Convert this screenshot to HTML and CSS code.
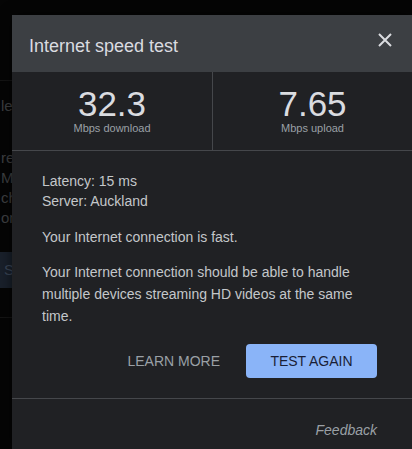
FILE: index.html
```html
<!DOCTYPE html>
<html lang="en">
<head>
    <meta charset="UTF-8">
    <meta name="viewport" content="width=device-width, initial-scale=1.0">
    <title>Internet speed test</title>
    <link rel="stylesheet" href="styles.css">
</head>
<body>
    <div class="page">
        <div class="page-top"></div>
        <div class="page-row">
            <span class="page-text">le</span>
        </div>
        <div class="page-block">
            <p class="page-text">re</p>
            <p class="page-text">M</p>
            <p class="page-text">ch</p>
            <p class="page-text">on</p>
        </div>
        <div class="page-action">
            <span class="page-btn">Sh</span>
        </div>
    </div>

    <div class="dialog">
        <div class="dialog-header">
            <h1>Internet speed test</h1>
            <button class="close" type="button" aria-label="Close">
                <svg width="14" height="14" viewBox="0 0 14 14">
                    <path d="M1 1 L13 13 M13 1 L1 13" stroke="#dadce0" stroke-width="2" fill="none"/>
                </svg>
            </button>
        </div>

        <div class="stats">
            <div class="stat">
                <span class="stat-value">32.3</span>
                <span class="stat-label">Mbps download</span>
            </div>
            <div class="stat">
                <span class="stat-value">7.65</span>
                <span class="stat-label">Mbps upload</span>
            </div>
        </div>

        <div class="dialog-body">
            <div class="meta">
                <p>Latency: 15 ms</p>
                <p>Server: Auckland</p>
            </div>
            <p class="summary">Your Internet connection is fast.</p>
            <p class="summary">Your Internet connection should be able to handle multiple devices streaming HD videos at the same time.</p>
            <div class="actions">
                <button class="btn-text" type="button">LEARN MORE</button>
                <button class="btn-primary" type="button">TEST AGAIN</button>
            </div>
        </div>

        <div class="dialog-footer">
            <a class="feedback" href="#">Feedback</a>
        </div>
    </div>
</body>
</html>
```

FILE: styles.css
```css
:root {
    --color-header: #3c3f43;
    --color-surface: #202124;
    --color-line: #45474b;
    --color-title: #dadce0;
    --color-text: #c4c7ca;
    --color-muted: #9aa0a6;
    --color-accent: #8ab4f8;
}
body {
    font-family: 'Liberation Sans', Arial, sans-serif;
    background-color: #050505;
    margin: 0;
    padding: 0;
    height: 449px;
    overflow: hidden;
    position: relative;
}

/* dimmed page behind the dialog */
.page {
    width: 60px;
    color: #3e3f41;
    font-size: 15px;
}
.page-top {
    height: 80px;
    border-bottom: 1px solid #141414;
}
.page-row {
    height: 48px;
    display: flex;
    align-items: center;
}
.page-text {
    padding-left: 1px;
}
.page-block {
    padding-top: 19px;
}
.page-block .page-text {
    margin: 0;
    line-height: 20px;
}
.page-action {
    margin-top: 24px;
    padding-bottom: 29px;
    border-bottom: 1px solid #141414;
}
.page-btn {
    display: block;
    width: 40px;
    height: 36px;
    line-height: 36px;
    padding-left: 4px;
    background-color: #19202b;
    color: #3a4556;
}

/* dialog */
.dialog {
    position: absolute;
    left: 12px;
    top: 15px;
    width: 400px;
    height: 434px;
    background-color: var(--color-surface);
    box-shadow: 0 0 12px rgba(0,0,0,0.6);
}
.dialog-header {
    height: 57px;
    background-color: var(--color-header);
    display: flex;
    align-items: center;
    justify-content: space-between;
    padding: 0 20px 0 17px;
}
.dialog-header h1 {
    margin: 5px 0 0;
    font-size: 18px;
    font-weight: 400;
    color: var(--color-title);
}
.close {
    background: none;
    border: none;
    padding: 0;
    width: 14px;
    height: 14px;
    margin-top: -8px;
    cursor: pointer;
}
.close svg {
    display: block;
}
.stats {
    display: grid;
    grid-template-columns: 1fr 1fr;
    border-bottom: 1px solid var(--color-line);
}
.stat {
    height: 78px;
    display: flex;
    flex-direction: column;
    align-items: center;
    padding-top: 14px;
    box-sizing: border-box;
}
.stat + .stat {
    border-left: 1px solid var(--color-line);
}
.stat-value {
    font-size: 35px;
    line-height: 36px;
    color: var(--color-title);
}
.stat-label {
    font-size: 11px;
    line-height: 14px;
    color: var(--color-muted);
    margin-top: -1px;
}
.dialog-body {
    padding: 20px 35px 0 30px;
    height: 248px;
    box-sizing: border-box;
    border-bottom: 1px solid var(--color-line);
    color: var(--color-text);
    font-size: 14px;
}
.meta p {
    margin: 0;
    line-height: 20px;
}
.summary {
    margin: 15px 0 0;
    line-height: 22px;
}
.summary + .summary {
    margin-top: 13px;
}
.actions {
    display: flex;
    justify-content: flex-end;
    align-items: center;
    gap: 26px;
    margin-top: 17px;
}
.btn-text {
    background: none;
    border: none;
    padding: 0;
    font-family: inherit;
    font-size: 14px;
    color: var(--color-muted);
    cursor: pointer;
}
.btn-primary {
    width: 131px;
    height: 34px;
    border: none;
    border-radius: 4px;
    background-color: var(--color-accent);
    color: #1a1f36;
    font-family: inherit;
    font-size: 14px;
    cursor: pointer;
}
.dialog-footer {
    display: flex;
    justify-content: flex-end;
    padding: 23px 35px 0 0;
}
.feedback {
    font-size: 14px;
    font-style: italic;
    color: var(--color-muted);
    text-decoration: none;
}
```
